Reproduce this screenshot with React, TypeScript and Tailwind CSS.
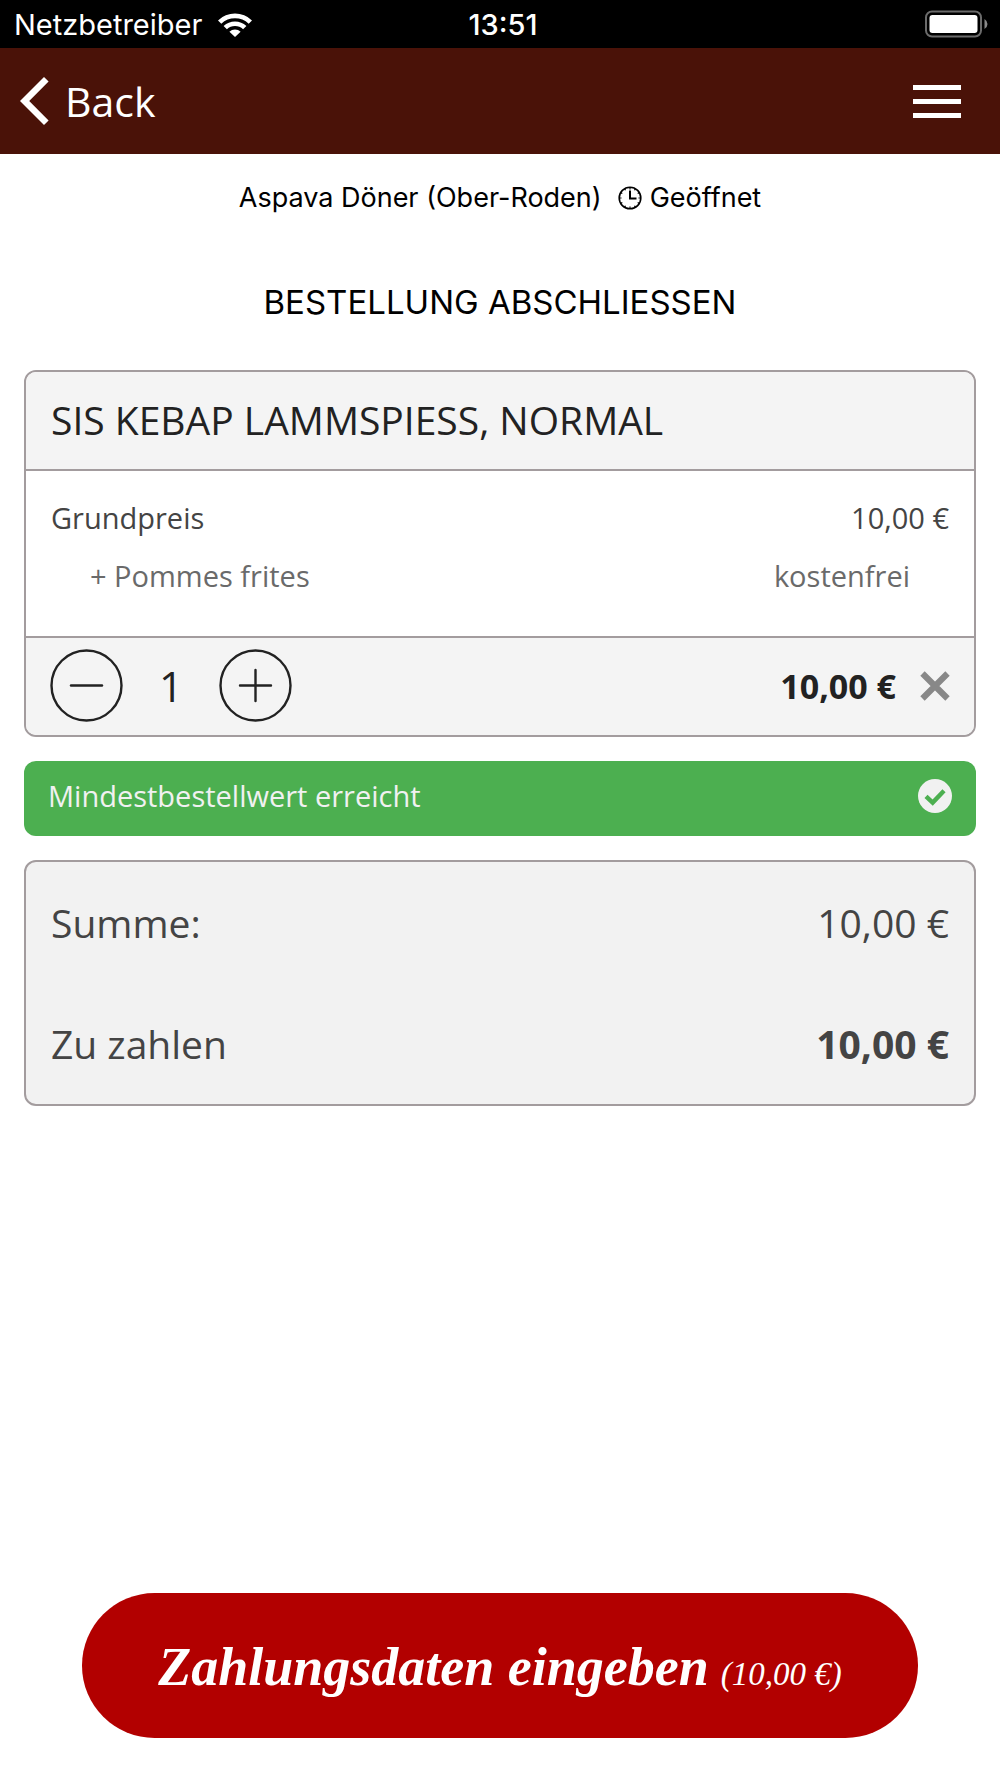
import { useState } from "react";

const PRICE = 10;

function euro(value: number) {
  return `${value.toFixed(2).replace(".", ",")} €`;
}

function StatusBar() {
  return (
    <div className="grid h-12 grid-cols-3 items-center bg-black pl-[14px] pr-3 font-['Inter',sans-serif] text-[29px] leading-8 text-white">
      <div className="flex items-center gap-4 pt-[2px]">
        <span>Netzbetreiber</span>
        <svg className="h-6 w-[34px]" viewBox="0 0 34 24" fill="white" aria-hidden="true">
          <path d="M0 7.4 A24.5 24.5 0 0 1 34 7.4 L30.7 10.7 A19.8 19.8 0 0 0 3.3 10.7 Z" />
          <path d="M5.6 13 A16.6 16.6 0 0 1 28.4 13 L25.1 16.3 A11.8 11.8 0 0 0 8.9 16.3 Z" />
          <path d="M11.4 18.7 A8.4 8.4 0 0 1 22.6 18.7 L17 24 Z" />
        </svg>
      </div>
      <span className="pt-[2px] pl-1 text-center font-medium">13:51</span>
      <svg className="h-7 w-[63px] justify-self-end" viewBox="0 0 63 28" aria-hidden="true">
        <rect x="1" y="1.5" width="55" height="25" rx="6" fill="none" stroke="#6b6b6b" strokeWidth="2" />
        <rect x="4.5" y="5" width="48" height="18" rx="3" fill="white" />
        <path d="M59.5 9 Q62.5 11 62.5 14 T59.5 19 Z" fill="#8a8a8a" />
      </svg>
    </div>
  );
}

function Header() {
  return (
    <header className="flex h-[106px] items-center justify-between bg-[#4a1208] pl-5 pr-[39px] text-white">
      <button type="button" className="flex items-center gap-4 text-[41px] leading-[56px]">
        <svg className="h-12 w-[29px]" viewBox="0 0 29 48" fill="white" aria-hidden="true">
          <path d="M24 0 L28.6 4.6 L9.2 24 L28.6 43.4 L24 48 L0 24 Z" />
        </svg>
        Back
      </button>
      <button type="button" aria-label="Menü" className="flex flex-col gap-[9px]">
        <span className="h-[5px] w-12 bg-white" />
        <span className="h-[5px] w-12 bg-white" />
        <span className="h-[5px] w-12 bg-white" />
      </button>
    </header>
  );
}

function ClockIcon() {
  return (
    <svg className="h-6 w-6" viewBox="0 0 24 24" fill="none" stroke="black" aria-hidden="true">
      <circle cx="12" cy="12" r="10.8" strokeWidth="1.6" />
      <path d="M12 4.5 V12.4 H18.5" strokeWidth="2" />
      <path
        d="M12 1.5v2M12 20.5v2M1.5 12h2M20.5 12h2M6.7 2.9l.8 1.4M16.5 19.7l.8 1.4M2.9 6.7l1.4.8M19.7 16.5l1.4.8M2.9 17.3l1.4-.8M19.7 7.5l1.4-.8M6.7 21.1l.8-1.4M16.5 4.3l.8-1.4"
        strokeWidth="1.2"
      />
    </svg>
  );
}

export default function App() {
  const [count, setCount] = useState(1);
  const total = euro(PRICE * count);

  return (
    <div className="flex min-h-screen flex-col bg-white font-['Open_Sans',sans-serif]">
      <StatusBar />
      <Header />

      <main className="flex flex-1 flex-col px-6">
        <div className="mt-[26px] flex items-center justify-center gap-4 font-['Inter',sans-serif] text-[27px] leading-9 text-black">
          <span>Aspava Döner (Ober-Roden)</span>
          <span className="flex items-center gap-2">
            <ClockIcon />
            Geöffnet
          </span>
        </div>
        <h1 className="mt-16 text-center font-['Inter',sans-serif] text-[33px] leading-11 text-black">
          BESTELLUNG ABSCHLIESSEN
        </h1>

        <section className="mt-[46px] overflow-hidden rounded-xl border-2 border-[#a39c9e]">
          <h2 className="bg-[#f4f4f4] px-[25px] pb-[21px] pt-[19px] text-[39px] leading-[57px] text-[#222]">
            SIS KEBAP LAMMSPIESS, NORMAL
          </h2>
          <dl className="border-y-2 border-[#a39c9e] px-[25px] pb-10 pt-[27px] text-[29px] leading-10">
            <div className="flex justify-between text-[#444]">
              <dt>Grundpreis</dt>
              <dd>{euro(PRICE)}</dd>
            </div>
            <div className="mt-[18px] flex justify-between px-[39px] text-[#6a6a6a]">
              <dt>+ Pommes frites</dt>
              <dd>kostenfrei</dd>
            </div>
          </dl>
          <div className="flex items-center justify-between bg-[#f4f4f4] px-6 pb-[13px] pt-[11px] text-[#222]">
            <div className="flex items-center gap-6">
              <button type="button" aria-label="Weniger" onClick={() => setCount(Math.max(1, count - 1))}>
                <svg className="size-[73px]" viewBox="0 0 73 73" fill="none" stroke="#222" strokeWidth="2.4" strokeLinecap="round">
                  <circle cx="36.5" cy="36.5" r="35" />
                  <path d="M21 36.5 H52" />
                </svg>
              </button>
              <output className="w-12 text-center text-[42px] leading-[56px]">{count}</output>
              <button type="button" aria-label="Mehr" onClick={() => setCount(count + 1)}>
                <svg className="size-[73px]" viewBox="0 0 73 73" fill="none" stroke="#222" strokeWidth="2.4" strokeLinecap="round">
                  <circle cx="36.5" cy="36.5" r="35" />
                  <path d="M21 36.5 H52 M36.5 21 V52" />
                </svg>
              </button>
            </div>
            <div className="flex items-center gap-6">
              <strong className="text-[34px] leading-[44px]">{total}</strong>
              <button type="button" aria-label="Entfernen">
                <svg className="size-[30px]" viewBox="0 0 30 30" stroke="#888" strokeWidth="6.2">
                  <path d="M2.5 2.5 L27.5 27.5 M27.5 2.5 L2.5 27.5" />
                </svg>
              </button>
            </div>
          </div>
        </section>

        <div className="mt-6 flex items-center justify-between rounded-xl bg-[#4caf50] px-6 pb-5 pt-[15px] text-[29px] leading-10 text-[#f1f1f1]">
          <span>Mindestbestellwert erreicht</span>
          <svg className="size-[34px]" viewBox="0 0 34 34" aria-hidden="true">
            <circle cx="17" cy="17" r="17" fill="#f1f1f1" />
            <path d="M8 17.3 L14.7 23.6 L26 11.8" fill="none" stroke="#4caf50" strokeWidth="4.4" />
          </svg>
        </div>

        <dl className="mt-6 flex flex-col gap-16 rounded-xl border-2 border-[#a39c9e] bg-[#f2f2f2] px-[25px] pb-[32px] pt-8 text-[39px] leading-[57px] text-[#444]">
          <div className="flex justify-between">
            <dt>Summe:</dt>
            <dd>{total}</dd>
          </div>
          <div className="flex justify-between">
            <dt>Zu zahlen</dt>
            <dd className="font-bold">{total}</dd>
          </div>
        </dl>
      </main>

      <footer className="px-[82px] pb-10 pt-8">
        <button
          type="button"
          className="flex w-full items-baseline justify-center gap-3 rounded-full bg-[#b20000] pb-[34px] pt-[38px] font-['Liberation_Serif',serif] font-bold italic text-white"
        >
          <span className="text-[54px] leading-[73px]">Zahlungsdaten eingeben</span>
          <span className="text-[33px] font-normal leading-11">({total})</span>
        </button>
      </footer>
    </div>
  );
}
